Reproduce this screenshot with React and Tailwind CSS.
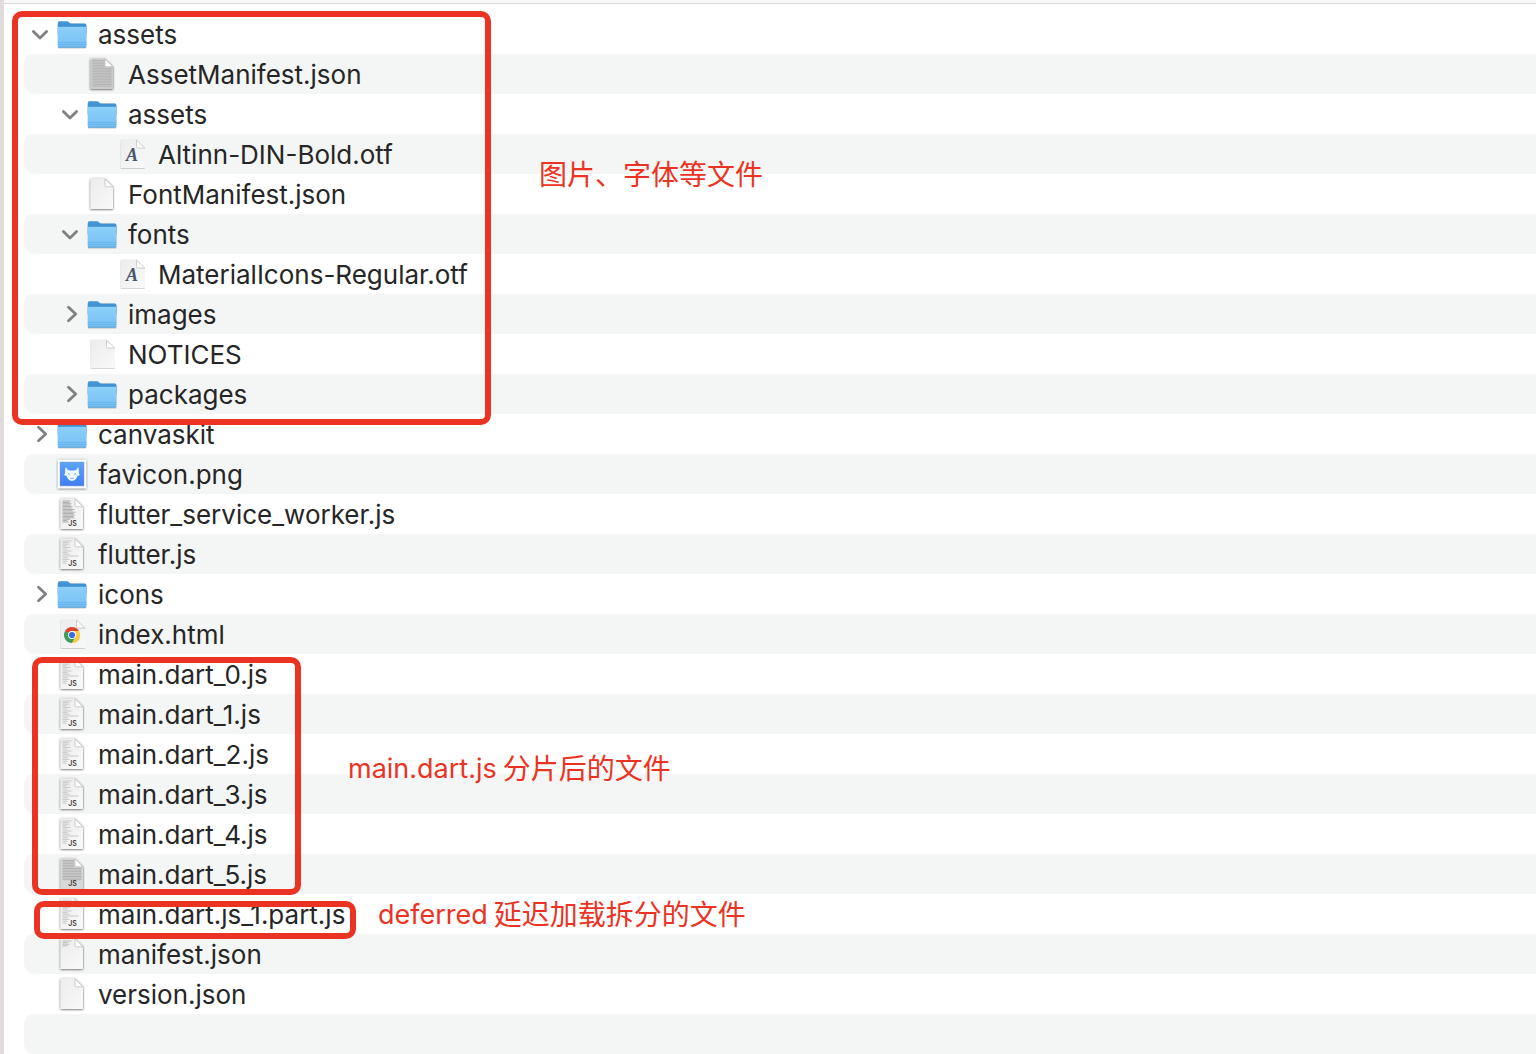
import React from "react";

const rows = [
  { name: "assets", kind: "folder", level: 0, open: true },
  { name: "AssetManifest.json", kind: "dense", level: 1 },
  { name: "assets", kind: "folder", level: 1, open: true },
  { name: "Altinn-DIN-Bold.otf", kind: "font", level: 2 },
  { name: "FontManifest.json", kind: "page", level: 1 },
  { name: "fonts", kind: "folder", level: 1, open: true },
  { name: "MaterialIcons-Regular.otf", kind: "font", level: 2 },
  { name: "images", kind: "folder", level: 1, open: false },
  { name: "NOTICES", kind: "blank", level: 1 },
  { name: "packages", kind: "folder", level: 1, open: false },
  { name: "canvaskit", kind: "folder", level: 0, open: false },
  { name: "favicon.png", kind: "image", level: 0 },
  { name: "flutter_service_worker.js", kind: "jsHeavy", level: 0 },
  { name: "flutter.js", kind: "js", level: 0 },
  { name: "icons", kind: "folder", level: 0, open: false },
  { name: "index.html", kind: "html", level: 0 },
  { name: "main.dart_0.js", kind: "js", level: 0 },
  { name: "main.dart_1.js", kind: "js", level: 0 },
  { name: "main.dart_2.js", kind: "js", level: 0 },
  { name: "main.dart_3.js", kind: "js", level: 0 },
  { name: "main.dart_4.js", kind: "js", level: 0 },
  { name: "main.dart_5.js", kind: "jsDense", level: 0 },
  { name: "main.dart.js_1.part.js", kind: "js", level: 0 },
  { name: "manifest.json", kind: "pageTop", level: 0 },
  { name: "version.json", kind: "page", level: 0 },
];

const indents = ["", "pl-[30px]", "pl-[60px]"];

const lightLines = [
  [7, 9], [8.6, 6], [10.2, 7], [11.8, 4], [13.4, 8], [15, 5], [17, 9], [18.6, 5],
  [20.2, 7], [22, 16], [23.8, 5], [25.4, 7], [27.2, 5], [29, 4],
];
const heavyLines = [
  [7, 8], [8.4, 7], [9.8, 9], [11.2, 8], [12.6, 10], [14, 9], [15.4, 12], [16.8, 10],
  [18.2, 13], [19.6, 11], [21, 12], [22.4, 11], [23.8, 12], [25.2, 8], [26.6, 5], [28, 6],
];
const topLines = [[7, 9], [8.6, 5], [10.2, 7], [11.8, 5]];
const denseLines = Array.from({ length: 17 }, (_, i) => [6.5 + i * 1.6, 19]);
const denseJsLines = denseLines.filter(([y]) => y < 26);

function Defs() {
  return (
    <svg className="absolute size-0" aria-hidden="true">
      <defs>
        <linearGradient id="folderFront" x1="0" y1="0" x2="0" y2="1">
          <stop offset="0" stopColor="#8dd0fb" />
          <stop offset="1" stopColor="#74c0f3" />
        </linearGradient>
        <linearGradient id="folderBack" x1="0" y1="0" x2="0" y2="1">
          <stop offset="0" stopColor="#4a9ad8" />
          <stop offset="1" stopColor="#2b7cc0" />
        </linearGradient>
        <linearGradient id="paper" x1="0" y1="0" x2="1" y2="1">
          <stop offset="0" stopColor="#ececec" />
          <stop offset="1" stopColor="#f9f9f9" />
        </linearGradient>
        <linearGradient id="favicon" x1="0" y1="0" x2="0" y2="1">
          <stop offset="0" stopColor="#5ba5f6" />
          <stop offset="1" stopColor="#407ff3" />
        </linearGradient>
        <filter id="lift" x="-20%" y="-20%" width="140%" height="140%">
          <feDropShadow dx="0" dy="0.5" stdDeviation="0.9" floodOpacity="0.7" />
        </filter>
        <filter id="softLift" x="-20%" y="-20%" width="140%" height="140%">
          <feDropShadow dx="0" dy="0.4" stdDeviation="0.7" floodOpacity="0.4" />
        </filter>
      </defs>
    </svg>
  );
}

function Folder() {
  return (
    <g filter="url(#softLift)">
      <path d="M1.800 9q0-1.800 1.800-1.800h7.200q1 0 1.800.7l1.200 1q.8.6 1.800.6h13q1.800 0 1.800 1.800V20H1.800z" fill="url(#folderBack)" />
      <path d="M1.800 14q0-1.300 1.300-1.300h26q1.300 0 1.300 1.300v18q0 1.500-1.500 1.500H3.300q-1.500 0-1.500-1.500z" fill="url(#folderFront)" />
      <path d="M2 28.500h28.200M2 30.600h28.200" stroke="#62aee3" strokeWidth="0.700" />
      <path d="M2.200 33.200h27.800" stroke="#4f98cc" strokeWidth="0.700" />
    </g>
  );
}

function TallPage({ lines = [], tone = "#9b9b9b", fill = "url(#paper)", label }) {
  return (
    <g>
      <path d="M4.500 4.800h14.500l8 8v22.200h-22.500z" fill={fill} filter="url(#lift)" />
      <g stroke={tone} strokeWidth="0.900">
        {lines.map(([y, w]) => {
          const end = Math.min(6.5 + w, y < 13 ? 18 : 25.5);
          return <path key={y} d={`M6.500 ${y}H${end}`} />;
        })}
      </g>
      <path d="M19 4.800v6.700q0 1.300 1.300 1.300h6.700z" fill="#fff" stroke="#a8a8a8" strokeWidth="0.600" />
      {label && (
        <text x="16.500" y="31.500" textAnchor="middle" fontSize="7" fontWeight="500" fill="#222" fontFamily="Inter, sans-serif">
          {label}
        </text>
      )}
    </g>
  );
}

function WidePage({ children }) {
  return (
    <g>
      <path d="M5 5.800h15.500l8.500 8.500v18.700q0 1-1 1h-22.500q-1 0-1-1v-26q0-1.200 1-1.200z" fill="url(#paper)" filter="url(#softLift)" />
      <path d="M20.500 6v6.500q0 1.600 1.500 1.600h6.800z" fill="#fff" stroke="#bcbcbc" strokeWidth="0.700" />
      {children}
    </g>
  );
}

function Glyph({ kind }) {
  switch (kind) {
    case "folder":
      return <Folder />;
    case "dense":
      return <TallPage lines={denseLines} tone="#b2b2b2" fill="#cacaca" />;
    case "jsDense":
      return <TallPage lines={denseJsLines} tone="#acacac" fill="#d8d8d8" label="JS" />;
    case "jsHeavy":
      return <TallPage lines={heavyLines} tone="#a2a2a2" label="JS" />;
    case "js":
      return <TallPage lines={lightLines} tone="#c4c4c4" label="JS" />;
    case "pageTop":
      return <TallPage lines={topLines} tone="#b5b5b5" />;
    case "page":
      return <TallPage />;
    case "blank":
      return <WidePage />;
    case "font":
      return (
        <WidePage>
          <text x="16" y="27" textAnchor="middle" fontSize="18" fontWeight="700" fontStyle="italic" fill="#46566f" fontFamily="Liberation Serif, serif">
            A
          </text>
        </WidePage>
      );
    case "html":
      return (
        <WidePage>
          <path d="M16 21L9.070 17A8 8 0 0 1 22.930 17z" fill="#d94434" />
          <path d="M16 21L22.930 17A8 8 0 0 1 16 29z" fill="#f7cb4a" />
          <path d="M16 21L16 29A8 8 0 0 1 9.070 17z" fill="#3f9d57" />
          <path d="M16 17h6.900l-3.500 6z" fill="#f7cb4a" />
          <path d="M9.070 17h13.860H16L12.500 19z" fill="#d94434" />
          <path d="M19.460 23L16 29l-3.500-4z" fill="#3f9d57" />
          <path d="M19.460 23L16 29q7-.3 8-6z" fill="#f7cb4a" />
          <circle cx="16" cy="21" r="4" fill="#fff" />
          <circle cx="16" cy="21" r="3.100" fill="#3a6fe0" />
        </WidePage>
      );
    default:
      return (
        <g>
          <path d="M1.800 5.800h28.400v28.400h-28.400z" fill="#fff" filter="url(#lift)" />
          <path d="M4.200 8.200h23.600v23.600h-23.600z" fill="url(#favicon)" stroke="#3b6fc8" strokeWidth="0.500" />
          <path d="M9.800 13q1.600 3.400 4 3.500h4.400q2.400-.1 4-3.500 1.200 3.200.6 5.500l1 2.500-2.600 1.300q-1.300 4.300-5.200 4.700-3.900-.4-5.200-4.700l-2.600-1.300 1-2.500q-.6-2.300.6-5.500z" fill="#f1f7ff" />
          <path d="M12 19.500l2.200 1M20 19.500l-2.200 1M14 24q2 1 4 0" fill="none" stroke="#78a9ef" strokeWidth="0.900" />
        </g>
      );
  }
}

function Chevron({ open, name }) {
  return (
    <button type="button" aria-expanded={open} aria-label={name} className="h-10 w-8">
      <svg viewBox="0 0 32 40" className="h-10 w-8" fill="none" stroke="#808080" strokeWidth="2.800" strokeLinecap="round" strokeLinejoin="round" aria-hidden="true">
        <path d={open ? "M9.400 17.500L16 24L22.600 17.500" : "M14.500 13.200L21.700 20L14.500 26.800"} />
      </svg>
    </button>
  );
}

function Row({ row }) {
  return (
    <li className="h-10 rounded-l-[10px] even:bg-[#f4f5f5]">
      {row && (
        <div className={`flex items-start ${indents[row.level]}`}>
          {row.kind === "folder" ? <Chevron open={row.open} name={row.name} /> : <span className="w-8" />}
          <svg viewBox="0 0 32 40" className="h-10 w-8 shrink-0" aria-hidden="true">
            <Glyph kind={row.kind} />
          </svg>
          <span className="whitespace-nowrap pl-[10px] text-[26px] leading-[42px]">{row.name}</span>
        </div>
      )}
    </li>
  );
}

const note = "absolute whitespace-nowrap text-[28px] leading-10 text-[#eb3324]";
const box = "pointer-events-none absolute border-6 border-[#eb3324]";

export default function App() {
  return (
    <main className="relative min-h-screen overflow-hidden border-l-4 border-[#e0dadd] bg-white font-[Inter,'Noto_Sans_CJK_SC',sans-serif] text-[#262626]">
      <Defs />
      <div className="mb-[10px] h-1 border-b border-[#d9d9d9] bg-[#f8f8f8]" />
      <ul className="pl-5">
        {rows.map((row, i) => (
          <Row key={i} row={row} />
        ))}
        <Row />
      </ul>

      <div className={`${box} left-2 top-[11px] h-[414px] w-[479px] rounded-[10px]`} />
      <div className={`${box} left-7 top-[657px] h-[238px] w-[269px] rounded-[10px]`} />
      <div className={`${box} left-[30px] top-[901px] h-[38px] w-[322px] rounded-[10px]`} />

      <p className={`${note} left-[535px] top-[155px]`}>图片、字体等文件</p>
      <p className={`${note} left-[344px] top-[749px] flex gap-[6px]`}>
        <span className="text-[27px]">main.dart.js</span>
        <span>分片后的文件</span>
      </p>
      <p className={`${note} left-[374px] top-[895px] flex gap-[6px]`}>
        <span className="text-[27px]">deferred</span>
        <span>延迟加载拆分的文件</span>
      </p>
    </main>
  );
}
